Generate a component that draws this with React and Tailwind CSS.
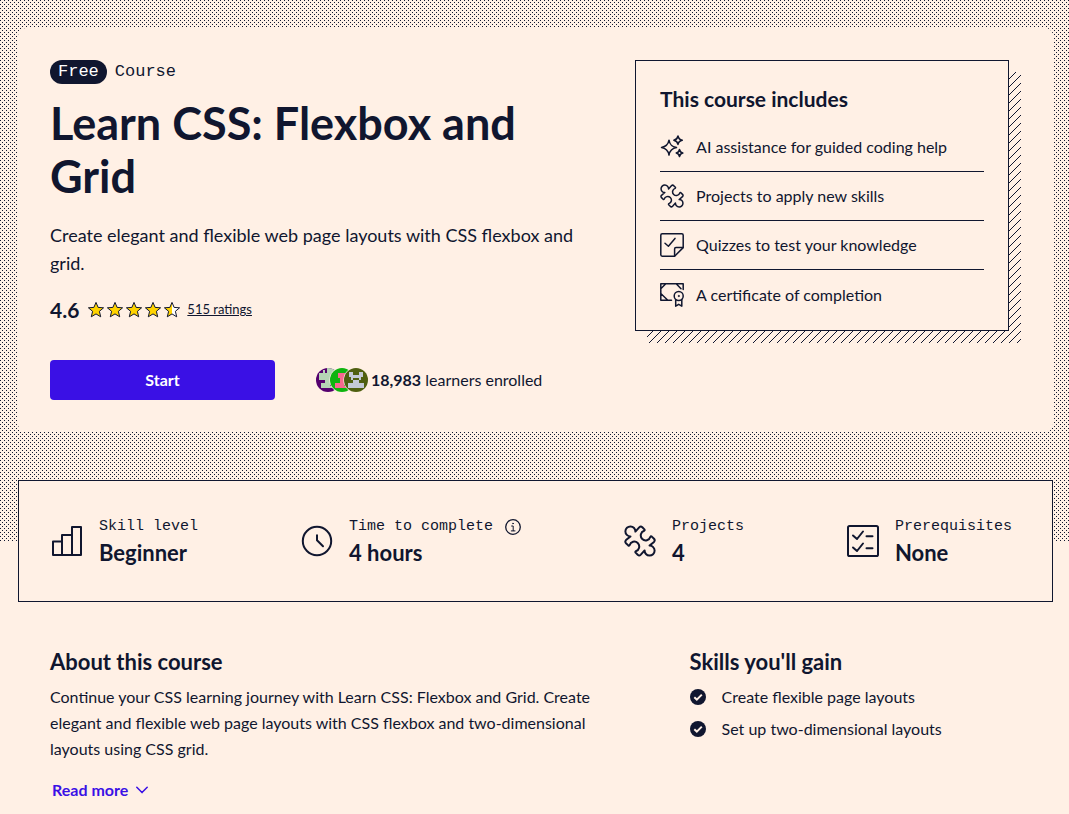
import { useId } from 'react';

const PUZZLE =
  'M6.4 11.4A5 5 0 1 1 11.4 6.6L15.2 2.4Q16.8 .8 18.3 2.2L20.4 4.4Q21 5.2 20.2 5.8A4.9 4.9 0 1 0 26.4 11.8Q27 11 27.8 11.6L30 13.8Q31.4 15.3 30 16.9L25.6 20.6A5 5 0 1 1 20.6 25.4L16.8 29.6Q15.2 31.2 13.7 29.8L11.6 27.6Q11 26.8 11.8 26.2A4.9 4.9 0 1 0 5.6 20.2Q5 21 4.2 20.4L2 18.2Q.6 16.7 2 15.1Z';

function Line({ size, box, width, children }) {
  return (
    <svg className="shrink-0" width={size} height={size} viewBox={`0 0 ${box} ${box}`} fill="none" stroke="currentColor" strokeWidth={width} strokeLinecap="round" strokeLinejoin="round" aria-hidden="true">
      {children}
    </svg>
  );
}

const Puzzle = ({ size, width }) => (
  <Line size={size} box={32} width={width}><path d={PUZZLE} /></Line>
);

const Sparkles = () => (
  <Line size={24} box={24} width={1.5}>
    <path d="M9 5.2C9.8 9.8 11.6 11.6 16.5 12.5C11.6 13.4 9.8 15.4 9 20C8.2 15.4 6.2 13.4 1.5 12.5C6.2 11.6 8.2 9.8 9 5.2Z" />
    <path d="M18 1C18.5 3.7 19.6 4.7 22.3 5.2C19.6 5.7 18.5 6.8 18 9.4C17.5 6.8 16.4 5.7 13.8 5.2C16.4 4.7 17.5 3.7 18 1Z" />
    <path d="M19.5 14.5C19.9 16.8 20.7 17.6 22.8 18C20.7 18.4 19.9 19.2 19.5 21.5C19.1 19.2 18.3 18.4 16.2 18C18.3 17.6 19.1 16.8 19.5 14.5Z" />
  </Line>
);

const Quiz = () => (
  <Line size={24} box={24} width={1.5}>
    <path d="M2.2.8H21.8Q23.2.8 23.2 2.2V14.6L14.6 23.2H2.2Q.8 23.2.8 21.8V2.2Q.8.8 2.2.8Z" />
    <path d="M14.6 23V16Q14.6 14.6 16 14.6H23" />
    <path d="M5 10.3L8.4 13.2L15 5.4" />
  </Line>
);

const Certificate = () => (
  <Line size={24} box={24} width={1.5}>
    <path d="M11.5 17.2H.8V.8H23.2V6.5M.8 5.8L5.8.8M16.2.8L21 5.8M.8 10.5L7.8 17.2" />
    <circle cx="18.7" cy="13" r="4.5" />
    <circle cx="18.7" cy="13" r=".6" fill="currentColor" strokeWidth=".8" />
    <path d="M15.7 16.5V23.2L18.7 21.3L21.8 23.2V16.5" />
  </Line>
);

const Bars = () => (
  <Line size={32} box={32} width={2}>
    <path d="M2 30V16.5H11V30ZM11 30V10H21V30ZM21 30V2H30V30Z" />
  </Line>
);

const Clock = () => (
  <Line size={32} box={32} width={2}>
    <circle cx="16" cy="16" r="14.2" />
    <path d="M16 10.3V15.3L22 21.3" />
  </Line>
);

const Checklist = () => (
  <Line size={32} box={32} width={2}>
    <rect x="1" y="1" width="30" height="30" rx="1.6" />
    <path d="M6 10.5L10 14L16 6.5M6 22.5L10 26L16 18.5M19.5 11.2H25.5M19.5 23.2H25.5" />
  </Line>
);

const Info = () => (
  <Line size={16} box={16} width={1.3}>
    <circle cx="8" cy="8" r="7.3" />
    <path d="M6.6 7H8.2V11.7M6.3 11.9H10" strokeWidth="1" />
    <circle cx="8" cy="4.5" r=".5" fill="currentColor" strokeWidth=".6" />
  </Line>
);

const STAR = 'M9 1.4L11.1 6.4L16.6 6.8L12.4 10.3L13.7 15.8L9 12.9L4.3 15.8L5.6 10.3L1.4 6.8L6.9 6.4Z';

function Star({ half }) {
  const id = useId();
  return (
    <svg width="18" height="18" viewBox="0 0 18 18" aria-hidden="true">
      <defs>
        <linearGradient id={id}>
          <stop offset="50%" stopColor="#ffd300" />
          <stop offset="50%" stopColor={half ? '#fff' : '#ffd300'} />
        </linearGradient>
      </defs>
      <path d={STAR} fill={`url(#${id})`} stroke="#10162f" strokeWidth="1" />
    </svg>
  );
}

const AVATARS = [
  { back: '#55006e', fore: '#b5d3b5', d: 'M3 5H7V2H9V5H11V0H24V14H14V18H18V20H5V15H9V12H3Z' },
  { back: '#0fb40f', fore: '#f7698f', d: 'M8 5H24V14H14V18H20V20H5V15H10V10H8Z' },
  { back: '#4f5f10', fore: '#c3c9d6', d: 'M5 4H9V7H15V4H19V9H17V12H15V10H9V12H7V9H5ZM9 12H15V15H20V20H4V15H9Z' },
];

function Avatar({ back, fore, d }) {
  const id = useId();
  return (
    <svg className="-mr-3 shrink-0" width="26" height="26" viewBox="-1 -1 26 26" aria-hidden="true">
      <clipPath id={id}><circle cx="12" cy="12" r="12" /></clipPath>
      <circle cx="12" cy="12" r="12.6" fill="#fff0e5" />
      <g clipPath={`url(#${id})`}>
        <rect width="24" height="24" fill={back} />
        <path d={d} fill={fore} shapeRendering="crispEdges" />
      </g>
    </svg>
  );
}

function Hatch() {
  return (
    <svg className="absolute top-3 left-3 h-full w-full" shapeRendering="crispEdges" aria-hidden="true">
      <defs>
        <pattern id="hatch" width="8" height="8" patternUnits="userSpaceOnUse">
          {[0, 1, 2, 3, 4, 5, 6, 7].map((y) => (
            <rect key={y} x={(8 - y) % 8} y={y} width="1" height="1" fill="#10162f" />
          ))}
        </pattern>
      </defs>
      <rect width="100%" height="100%" fill="url(#hatch)" />
    </svg>
  );
}

const INCLUDES = [
  [<Sparkles />, 'AI assistance for guided coding help'],
  [<Puzzle size={24} width={2} />, 'Projects to apply new skills'],
  [<Quiz />, 'Quizzes to test your knowledge'],
  [<Certificate />, 'A certificate of completion'],
];

const STATS = [
  [<Bars />, 'Skill level', 'Beginner'],
  [<Clock />, 'Time to complete', '4 hours'],
  [<Puzzle size={32} width={2} />, 'Projects', '4'],
  [<Checklist />, 'Prerequisites', 'None'],
];

const SKILLS = ['Create flexible page layouts', 'Set up two-dimensional layouts'];

export default function App() {
  return (
    <main className="min-h-screen bg-[#fff0e5] font-['Lato',sans-serif] text-base text-[#10162f]">
      <div className="bg-[conic-gradient(at_1px_1px,transparent_270deg,#10162f_0),conic-gradient(at_1px_1px,transparent_270deg,#10162f_0)] bg-[length:4px_4px] bg-[position:0_0,2px_2px] pt-7 pr-4 pb-[109px] pl-[18px]">
        <section className="grid grid-cols-12 gap-8 rounded-lg bg-[#fff0e5] p-8">
          <div className="col-span-7">
            <p className="flex items-center gap-2 font-['Liberation_Mono',monospace] text-[17px] leading-6">
              <span className="rounded-full bg-[#10162f] px-2 text-white">Free</span>
              Course
            </p>
            <h1 className="mt-[13px] max-w-[540px] text-[45px] leading-[53px] font-bold">Learn CSS: Flexbox and Grid</h1>
            <p className="mt-[18px] max-w-[540px] text-lg leading-7">Create elegant and flexible web page layouts with CSS flexbox and grid.</p>
            <div className="mt-[19px] flex h-7 items-center">
              <span className="text-[21px] font-bold">4.6</span>
              <span className="ml-2 flex gap-px">
                {[0, 1, 2, 3, 4].map((n) => <Star key={n} half={n === 4} />)}
              </span>
              <a href="#ratings" className="ml-1.5 text-[13px] underline">515 ratings</a>
            </div>
            <div className="mt-9 flex items-center gap-10">
              <button type="button" className="h-10 w-[225px] rounded-sm bg-[#3a10e5] font-bold text-white">Start</button>
              <div className="flex items-center">
                <span className="flex pr-3">
                  {AVATARS.map((a) => <Avatar key={a.back} {...a} />)}
                </span>
                <span className="ml-0.5"><strong>18,983</strong> learners enrolled</span>
              </div>
            </div>
          </div>
          <div className="col-span-5 pr-3">
            <div className="relative">
              <Hatch />
              <div className="relative border border-[#10162f] bg-[#fff0e5] px-6 pt-6 pb-[11px]">
                <h2 className="text-[21px] leading-7 font-bold">This course includes</h2>
                <ul className="mt-[10px]">
                  {INCLUDES.map(([icon, text]) => (
                    <li key={text} className="flex h-[49px] items-center gap-3 border-b border-[#10162f] last:border-0">
                      {icon}
                      {text}
                    </li>
                  ))}
                </ul>
              </div>
            </div>
          </div>
        </section>
      </div>

      <section className="-mt-[61px] mr-4 ml-[18px] flex h-[122px] items-center justify-between border border-[#10162f] bg-[#fff0e5] pr-10 pl-8">
        {STATS.map(([icon, label, value]) => (
          <div key={label} className="flex items-center gap-4">
            {icon}
            <div>
              <p className="flex items-center gap-3 font-['Liberation_Mono',monospace] text-[15px] leading-6">
                {label}
                {label === 'Time to complete' && (
                  <button type="button" aria-label="About time to complete"><Info /></button>
                )}
              </p>
              <p className="text-[22px] leading-7 font-bold">{value}</p>
            </div>
          </div>
        ))}
      </section>

      <section className="mr-12 ml-[50px] grid grid-cols-[11fr_6fr] gap-8 pt-[46px]">
        <div>
          <h2 className="text-[22px] leading-7 font-bold">About this course</h2>
          <p className="mt-2 max-w-[560px] leading-[26px]">
            Continue your CSS learning journey with Learn CSS: Flexbox and Grid. Create elegant and flexible web page layouts with CSS flexbox and two-dimensional layouts using CSS grid.
          </p>
          <button type="button" className="mt-4 ml-[2px] flex items-center gap-2 font-bold text-[#3a10e5]">
            Read more
            <Line size={12} box={12} width={1.5}><path d="M.8 3.2L6 8.6L11.2 3.2" /></Line>
          </button>
        </div>
        <div>
          <h2 className="text-[22px] leading-7 font-bold">Skills you'll gain</h2>
          <ul className="mt-[5px]">
            {SKILLS.map((skill) => (
              <li key={skill} className="flex h-8 items-center gap-4">
                <svg className="shrink-0" width="16" height="16" viewBox="0 0 16 16" aria-hidden="true">
                  <circle cx="8" cy="8" r="8" fill="#10162f" />
                  <path d="M4.3 8.3L6.8 10.6L11.8 5.6" fill="none" stroke="#fff0e5" strokeWidth="2" />
                </svg>
                {skill}
              </li>
            ))}
          </ul>
        </div>
      </section>
    </main>
  );
}
